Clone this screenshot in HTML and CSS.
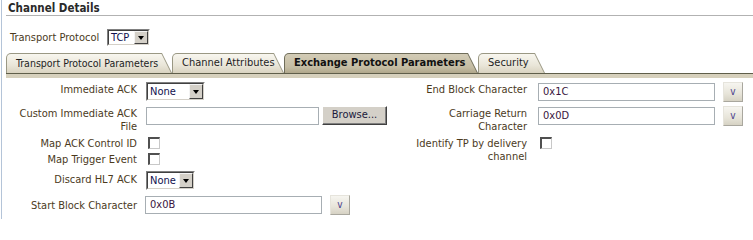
FILE: index.html
```html
<!DOCTYPE html>
<html>
<head>
<meta charset="utf-8">
<link rel="stylesheet" href="styles.css">
</head>
<body>
<div class="page">
  <div class="header">Channel Details</div>
  <div class="proto-row">
    <span class="lbl">Transport Protocol</span>
    <span class="select sel-tcp"><span class="sel-in"><span class="val">TCP</span><span class="arrow"></span></span></span>
  </div>
  <div class="tabs">
    <div class="tab t1"><div class="tab-in">Transport Protocol Parameters</div></div>
    <div class="tab t2"><div class="tab-in">Channel Attributes</div></div>
    <div class="tab t3 active"><div class="tab-in">Exchange Protocol Parameters</div></div>
    <div class="tab t4"><div class="tab-in">Security</div></div>
  </div>
  <div class="tabbar"></div>
  <div class="form">
    <div class="flabel p1">Immediate ACK</div>
    <div class="field"><span class="select sel-none1"><span class="sel-in"><span class="val">None</span><span class="arrow"></span></span></span></div>
    <div class="flabel p1">End Block Character</div>
    <div class="field rfield"><span class="input mt1">0x1C</span><span class="vbtn">v</span></div>

    <div class="flabel p1">Custom Immediate ACK<br>File</div>
    <div class="field"><span class="input wide mt1"></span><span class="browse">Browse...</span></div>
    <div class="flabel p1">Carriage Return<br>Character</div>
    <div class="field rfield"><span class="input mt1">0x0D</span><span class="vbtn">v</span></div>

    <div class="flabel p1">Map ACK Control ID</div>
    <div class="field"><span class="check"></span></div>
    <div class="flabel p1">Identify TP by delivery<br>channel</div>
    <div class="field rfield"><span class="check"></span></div>

    <div class="flabel p1">Map Trigger Event</div>
    <div class="field"><span class="check"></span></div>
    <div></div><div></div>

    <div class="flabel p3">Discard HL7 ACK</div>
    <div class="field"><span class="select sel-none2 mt1"><span class="sel-in"><span class="val">None</span><span class="arrow"></span></span></span></div>
    <div></div><div></div>

    <div class="flabel p5">Start Block Character</div>
    <div class="field sfield"><span class="input mt2">0x0B</span><span class="vbtn mt1">v</span></div>
    <div></div><div></div>
  </div>
</div>
</body>
</html>
```

FILE: styles.css
```css
html, body {
  margin: 0;
  padding: 0;
  background: #ffffff;
}
body {
  font-family: "DejaVu Sans Condensed", "DejaVu Sans", sans-serif;
  font-size: 11px;
  color: #222;
}
.page {
  margin-left: 1px;
  border-left: 1px solid #b4c4d8;
  padding-left: 4px;
  height: 219px;
  box-sizing: border-box;
  overflow: hidden;
}
.header {
  font-size: 11.5px;
  font-weight: bold;
  color: #2a2a2a;
  line-height: 14px;
  padding: 1px 0 0 2px;
  height: 14px;
  border-bottom: 1px solid #b2b2b2;
}
.proto-row {
  display: flex;
  align-items: center;
  margin-top: 13px;
  height: 17px;
  padding-left: 4px;
}
.lbl {
  color: #4b3a1c;
  width: 97px;
}
.select {
  display: inline-flex;
  box-sizing: border-box;
  border: 1px solid;
  border-color: #808080 #ffffff #ffffff #808080;
  background: #fff;
  vertical-align: top;
}
.sel-in {
  display: flex;
  flex: 1;
  border: 1px solid;
  border-color: #404040 #d4d0c8 #d4d0c8 #404040;
  background: #fff;
}
.val {
  flex: 1;
  color: #101050;
  font-size: 11px;
  padding-left: 2px;
  display: flex;
  align-items: center;
}
.arrow {
  width: 14px;
  box-sizing: border-box;
  background: #d4d0c8;
  border: 1px solid;
  border-color: #f4f4f4 #404040 #404040 #f4f4f4;
  display: flex;
  align-items: center;
  justify-content: center;
}
.arrow::after {
  content: "";
  width: 0;
  height: 0;
  border-top: 4px solid #000;
  border-left: 3.5px solid transparent;
  border-right: 3.5px solid transparent;
}
.sel-tcp { width: 43px; height: 17px; }
.sel-none1 { width: 59px; height: 19px; }
.sel-none2 { width: 49px; height: 19px; }

.tabs {
  display: flex;
  margin-top: 7px;
  height: 20px;
}
.tab {
  box-sizing: border-box;
  height: 20px;
  padding: 1px 0 0 1px;
  background: #9a9884;
  border-top-left-radius: 5px;
  clip-path: polygon(0 0, calc(100% - 10px) 0, 100% 100%, 0 100%);
}
.tab-in {
  height: 19px;
  box-sizing: border-box;
  border-top-left-radius: 4px;
  clip-path: polygon(0 0, calc(100% - 10.5px) 0, calc(100% - 1px) 100%, 0 100%);
  background: linear-gradient(#f8f6ef, #e9e5d8 60%, #d9d3c0);
  color: #1e1e1e;
  line-height: 18px;
  padding-left: 9px;
  white-space: nowrap;
}
.t1 { width: 166px; }
.t1 .tab-in { padding-left: 9px; font-size: 10.5px; }
.t2 { width: 112px; }
.t3 { width: 194px; }
.t4 { width: 67px; }
.tab.active { background: #6f6d5a; }
.tab.active .tab-in {
  background: linear-gradient(#d3ccb6, #c4bca3 70%, #b0a78b);
  font-weight: bold;
  color: #111;
}
.tabbar {
  height: 4px;
  border-top: 1px solid #5f5e4a;
  background: #d6d0bc;
}
.form {
  display: grid;
  grid-template-columns: 131px 258px 132px 1fr;
  grid-template-rows: 24px 30px 16px 18px 24px 22px;
  margin-top: 4px;
}
.flabel {
  text-align: right;
  color: #4b3a1c;
  line-height: 13px;
  white-space: nowrap;
}
.p1 { padding-top: 1px; }
.p3 { padding-top: 3px; }
.p5 { padding-top: 5px; }
.field {
  padding-left: 9px;
  display: flex;
  align-items: flex-start;
}
.rfield { padding-left: 11px; }
.sfield { padding-left: 8px; }
.mt1 { margin-top: 1px; }
.mt2 { margin-top: 2px; }
.input {
  box-sizing: border-box;
  width: 177px;
  height: 18px;
  border: 1px solid #a7aeb3;
  background: #fff;
  color: #3a1540;
  padding-left: 4px;
  line-height: 16px;
  margin-right: 8px;
}
.input.wide { width: 173px; margin-right: 3px; }
.vbtn {
  box-sizing: border-box;
  width: 20px;
  height: 20px;
  border: 1px solid;
  border-color: #e6e4dc #a9a79e #a9a79e #e6e4dc;
  background: linear-gradient(#f6f5f0, #e7e4d9 60%, #d6d2c4);
  color: #4a3e8c;
  text-align: center;
  line-height: 18px;
  font-size: 10px;
}
.browse {
  box-sizing: border-box;
  width: 65px;
  height: 19px;
  border: 1px solid;
  border-color: #ffffff #404040 #404040 #ffffff;
  box-shadow: inset -1px -1px 0 #808080;
  background: #d4d0c8;
  color: #1a1a3c;
  text-align: center;
  line-height: 16px;
}
.check {
  box-sizing: border-box;
  width: 12px;
  height: 12px;
  margin: 1px 0 0 2px;
  border-style: solid;
  border-width: 2px 1px 1px 2px;
  border-color: #505050 #c8c8c8 #c8c8c8 #505050;
  background: #fff;
}
```
